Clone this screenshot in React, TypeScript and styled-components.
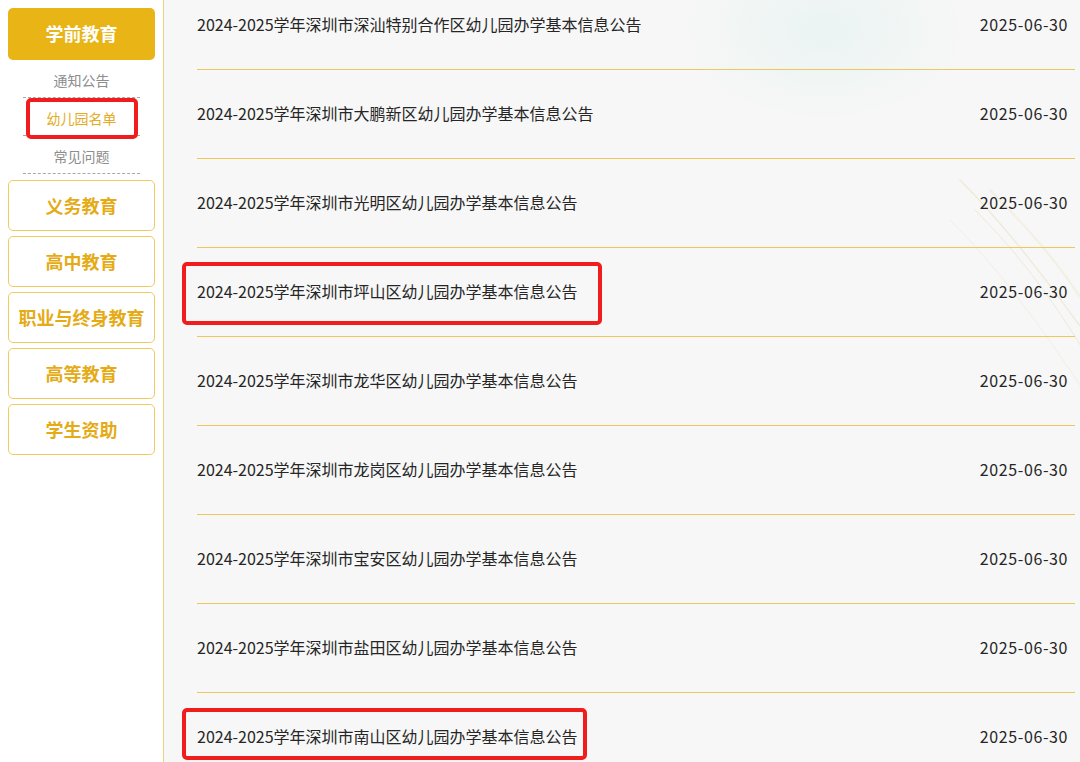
import React from "react";
import styled, { createGlobalStyle } from "styled-components";

const Global = createGlobalStyle`
  html, body { margin: 0; padding: 0; }
  body { font-family: "Noto Sans CJK SC", "Noto Sans", sans-serif; background: #f6f7f6; }
`;

const Page = styled.div`
  display: flex;
  width: 1080px;
  height: 762px;
  overflow: hidden;
`;

const Sidebar = styled.aside`
  width: 155px;
  flex: none;
  background: #ffffff;
  border-right: 1px solid #f0d27e;
  padding: 8px 0 0 8px;
  display: flex;
  flex-direction: column;
`;

const ActiveButton = styled.div`
  width: 147px;
  height: 52px;
  border-radius: 5px;
  background: #e8b416;
  color: #ffffff;
  font-weight: 700;
  font-size: 18px;
  display: flex;
  align-items: center;
  justify-content: center;
  padding-bottom: 2px;
  box-sizing: border-box;
`;

const SubList = styled.ul`
  list-style: none;
  margin: 0 0 6px 15px;
  padding: 0;
  width: 117px;
`;

const SubItem = styled.li<{ $active?: boolean }>`
  position: relative;
  height: 38px;
  box-sizing: border-box;
  padding-top: 2px;
  border-bottom: 1px dashed #a8a8a8;
  display: flex;
  align-items: center;
  justify-content: center;
  font-size: 14px;
  color: ${(p) => (p.$active ? "#e3ac22" : "#8d8d8d")};
`;

const SubMark = styled.span`
  position: absolute;
  left: 3px;
  right: 2px;
  top: 0;
  bottom: -4px;
  border: 4px solid #f11c1c;
  border-radius: 5px;
`;

const NavButton = styled.div`
  width: 145px;
  height: 49px;
  margin-bottom: 5px;
  border: 1px solid #f0cb60;
  border-radius: 5px;
  background: #ffffff;
  color: #e5ab16;
  font-weight: 700;
  font-size: 18px;
  display: flex;
  align-items: center;
  justify-content: center;
  padding-bottom: 2px;
  box-sizing: content-box;
  height: 47px;
`;

const Main = styled.main`
  position: relative;
  flex: 1;
  background:
    radial-gradient(ellipse 200px 130px at 660px 30px, rgba(220, 240, 238, 0.45), rgba(220, 240, 238, 0) 70%),
    #f6f7f6;
  overflow: hidden;
`;

const Deco = styled.svg`
  position: absolute;
  right: 0;
  top: 170px;
  pointer-events: none;
`;

const List = styled.ul`
  position: relative;
  list-style: none;
  margin: -19px 5px 0 33px;
  padding: 0;
`;

const Row = styled.li`
  position: relative;
  height: 88px;
  box-sizing: content-box;
  border-bottom: 1px solid #f0c75a;
  display: flex;
  align-items: center;
  justify-content: space-between;
  padding-right: 7px;
  font-size: 16px;
  color: #262626;
`;

const Title = styled.span`
  white-space: nowrap;
  margin-top: -3px;
`;

const DateText = styled.span`
  white-space: nowrap;
  letter-spacing: 0.6px;
  margin-top: -3px;
`;

const RowMark = styled.span`
  position: absolute;
  left: -15px;
  border: 4px solid #f11c1c;
  border-radius: 5px;
`;

const rows = [
  "深汕特别合作区",
  "大鹏新区",
  "光明区",
  "坪山区",
  "龙华区",
  "龙岗区",
  "宝安区",
  "盐田区",
  "南山区",
];

const marks: Record<number, { top: number; width: number; height: number }> = {
  3: { top: 14, width: 420, height: 63 },
  8: { top: 15, width: 405, height: 52 },
};

export default function App() {
  return (
    <Page>
      <Global />
      <Sidebar>
        <ActiveButton>学前教育</ActiveButton>
        <SubList>
          <SubItem>通知公告</SubItem>
          <SubItem $active>
            幼儿园名单
            <SubMark />
          </SubItem>
          <SubItem>常见问题</SubItem>
        </SubList>
        {["义务教育", "高中教育", "职业与终身教育", "高等教育", "学生资助"].map((t) => (
          <NavButton key={t}>{t}</NavButton>
        ))}
      </Sidebar>
      <Main>
        <Deco width="160" height="220" viewBox="0 0 160 220">
          <g fill="none" strokeLinecap="round">
            <path d="M40 10 C 80 50, 120 100, 170 170" stroke="#eadcc0" strokeWidth="1.2" opacity="0.55" />
            <path d="M55 40 C 95 80, 135 130, 175 200" stroke="#e8d6b2" strokeWidth="1" opacity="0.45" />
            <path d="M30 50 C 70 90, 110 140, 160 215" stroke="#eee2ca" strokeWidth="1" opacity="0.4" />
            <path d="M70 20 C 110 60, 145 100, 175 150" stroke="#f0e5cf" strokeWidth="2" opacity="0.45" />
          </g>
        </Deco>
        <List>
          {rows.map((name, i) => (
            <Row key={name}>
              <Title>2024-2025学年深圳市{name}幼儿园办学基本信息公告</Title>
              <DateText>2025-06-30</DateText>
              {marks[i] && (
                <RowMark
                  style={{ top: marks[i].top, width: marks[i].width - 8, height: marks[i].height - 8 }}
                />
              )}
            </Row>
          ))}
        </List>
      </Main>
    </Page>
  );
}
